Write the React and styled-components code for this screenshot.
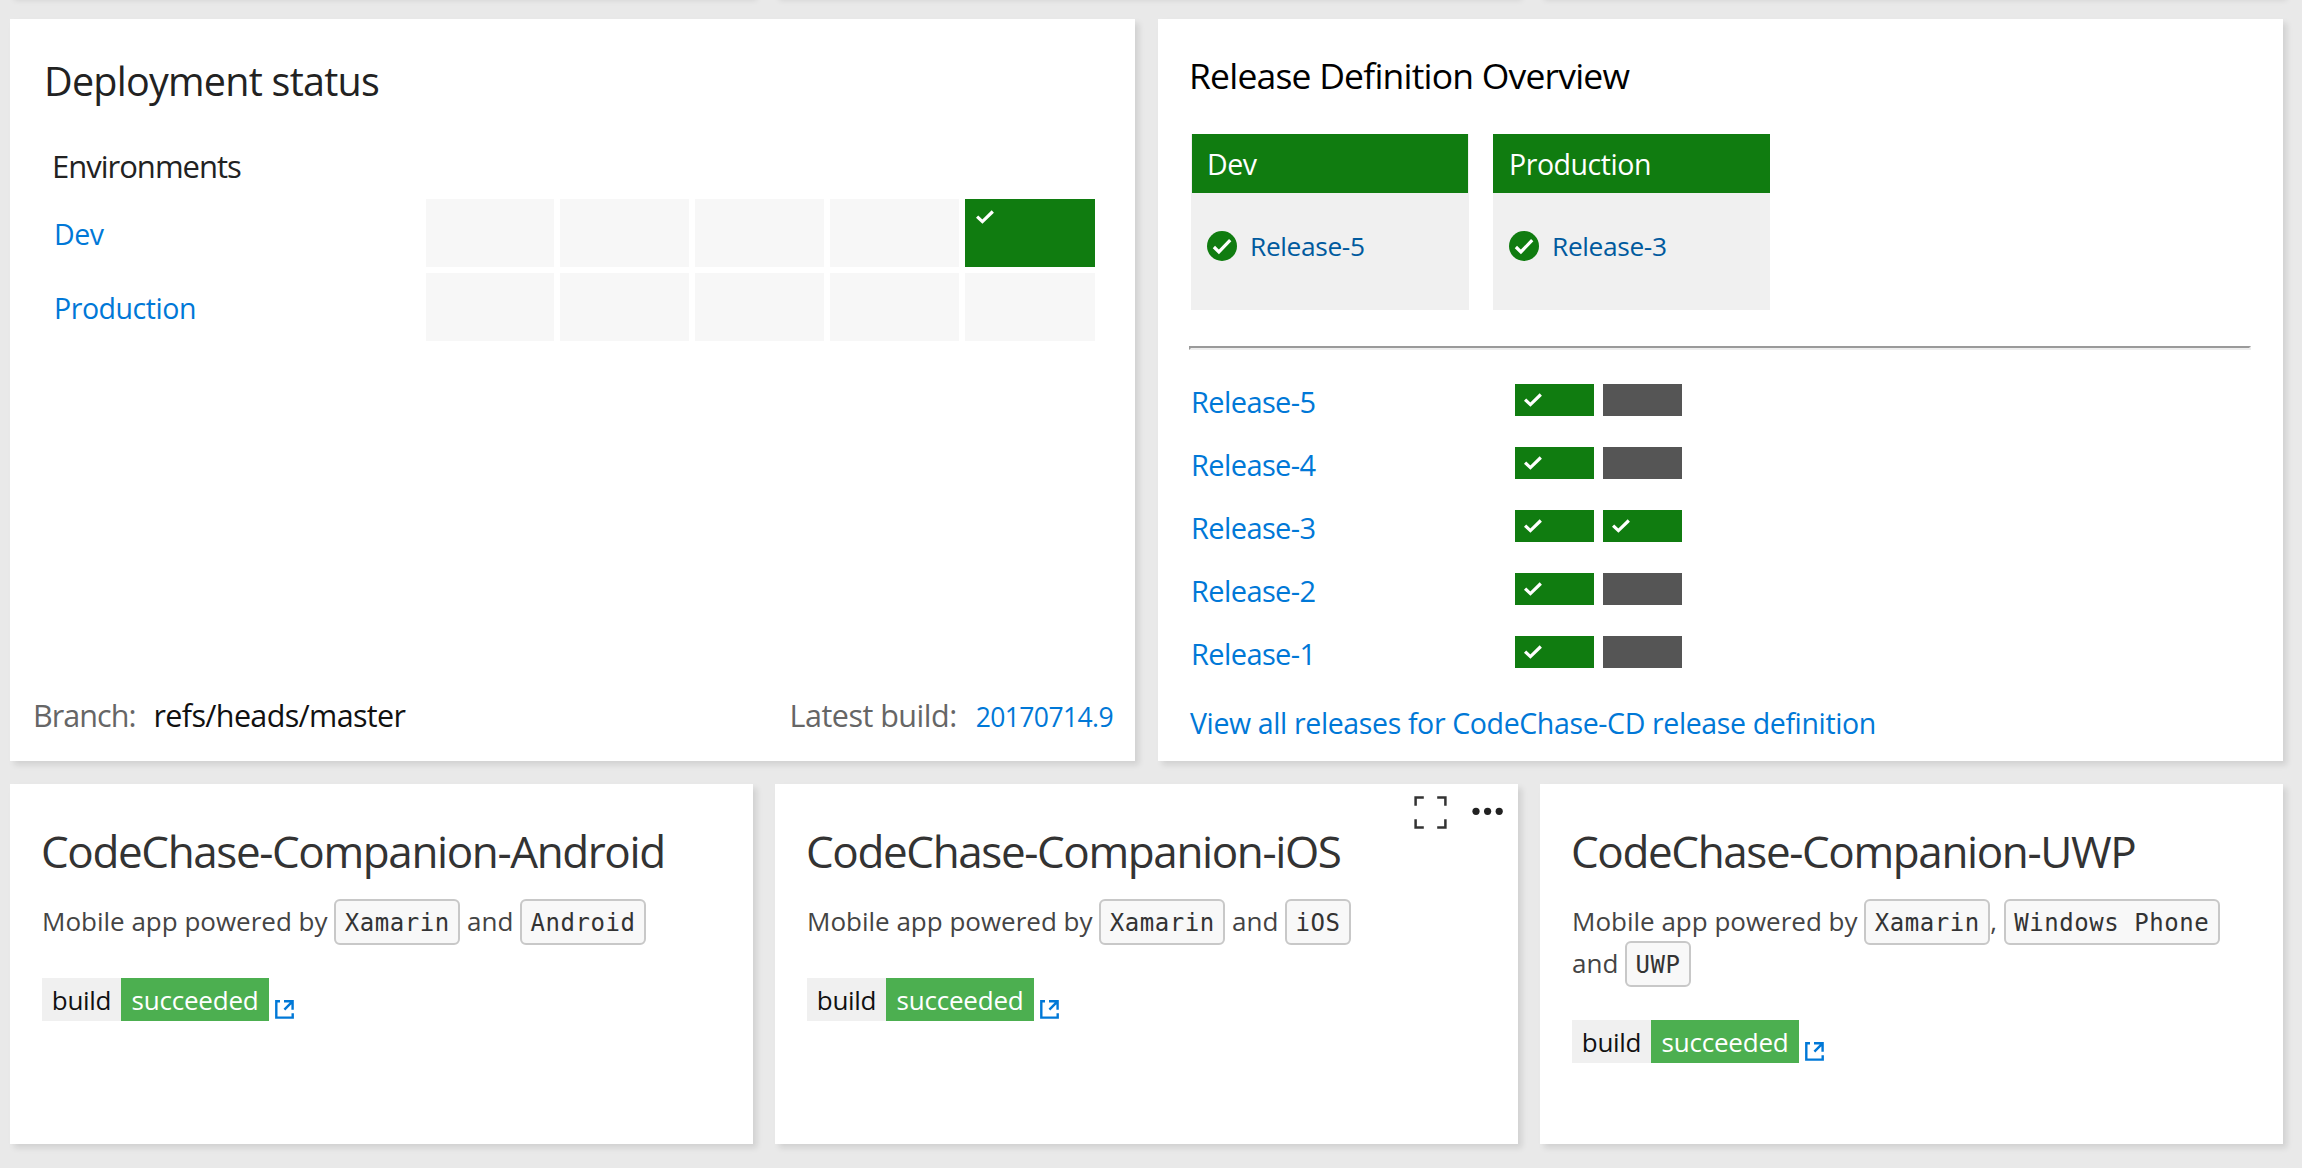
import React from "react";
import styled, { createGlobalStyle } from "styled-components";

const GlobalStyle = createGlobalStyle`
  *, *::before, *::after { box-sizing: border-box; }
  body {
    margin: 0;
    background: #e9e9e9;
    color: #222;
    font-family: "Open Sans", "Noto Sans", sans-serif;
  }
`;

const Dashboard = styled.main`
  display: flex;
  flex-direction: column;
  gap: 23px;
  width: 2302px;
  height: 1168px;
  padding-left: 10px;
  overflow: hidden;
`;

const WideRow = styled.div`
  display: grid;
  grid-template-columns: 1125px 1125px;
  column-gap: 23px;
`;

const TileRow = styled.div`
  display: grid;
  grid-template-columns: repeat(3, 743px);
  column-gap: 22px;
`;

const ScrolledRow = styled(TileRow)`
  flex: none;
  height: 60px;
  margin-top: -64px;
`;

const Card = styled.section`
  position: relative;
  display: flex;
  flex-direction: column;
  background: #fff;
  box-shadow: 4px 4px 6px rgba(0, 0, 0, 0.1);
`;

const DeploymentCard = styled(Card)`
  height: 742px;
  padding: 35px 22px 23px 0;
`;

const DeploymentTitle = styled.h2`
  margin: 0 0 0 34px;
  font-size: 39.5px;
  font-weight: 400;
  line-height: 54px;
  letter-spacing: -0.75px;
`;

const SectionLabel = styled.h3`
  margin: 37px 0 12px 42px;
  font-size: 31px;
  font-weight: 400;
  line-height: 42px;
  letter-spacing: -1px;
`;

const EnvironmentTable = styled.div`
  display: flex;
  flex-direction: column;
  gap: 6px;
  padding-left: 44px;
`;

const EnvironmentRow = styled.div`
  display: grid;
  grid-template-columns: 366px 128px 129px 129px 129px 130px;
  grid-template-rows: 68px;
  column-gap: 6px;
`;

const Link = styled.a`
  color: #0078d7;
  text-decoration: none;
  white-space: nowrap;
`;

const EnvironmentLink = styled(Link)`
  padding-top: 3px;
  font-size: 28.5px;
  line-height: 65px;
  letter-spacing: -0.45px;
`;

const Cell = styled.div`
  padding: 11px;
  line-height: 0;
  background: ${(p) => (p.$passed ? "#107c10" : "#f7f7f7")};
`;

const DeploymentFooter = styled.footer`
  display: flex;
  align-items: baseline;
  justify-content: space-between;
  margin-top: auto;
  padding-left: 23px;
  line-height: 42px;
`;

const Field = styled.div`
  display: flex;
  align-items: baseline;
  gap: ${(p) => p.$gap}px;
`;

const FieldName = styled.span`
  color: #666;
  font-size: 30.5px;
  letter-spacing: ${(p) => p.$tracking}px;
`;

const BranchName = styled.span`
  color: #111;
  font-size: 30.5px;
  letter-spacing: -0.65px;
`;

const BuildLink = styled(Link)`
  font-size: 26.5px;
  letter-spacing: -0.6px;
`;

const ReleaseCard = styled(Card)`
  height: 742px;
  padding: 32px 32px 0 31px;
`;

const ReleaseTitle = styled.h2`
  margin: 0;
  color: #000;
  font-size: 35.5px;
  font-weight: 400;
  line-height: 48px;
  letter-spacing: -0.8px;
`;

const StageList = styled.div`
  display: flex;
  gap: 24px;
  margin: 35px 0 36px 2px;
`;

const Stage = styled.article`
  width: ${(p) => p.$width}px;
  height: 176px;
  background: #f0f0f0;
`;

const StageHeader = styled.header`
  height: 59px;
  margin: 0 ${(p) => p.$inset}px;
  padding: 1px 0 0 ${(p) => 16 - p.$inset}px;
  background: #107c10;
  color: #fff;
  font-size: 28.5px;
  line-height: 59px;
  letter-spacing: -0.45px;
`;

const StageBody = styled.div`
  display: flex;
  align-items: center;
  gap: 13px;
  height: 38px;
  margin-top: 34px;
  padding-left: 16px;
`;

const StageLink = styled(Link)`
  color: #005a9e;
  font-size: 26.3px;
  letter-spacing: -0.35px;
`;

const Divider = styled.hr`
  width: 1062px;
  height: 4px;
  margin: 0 0 34px;
  border: 2px solid;
  border-color: #9a9a9a #eee #eee #9a9a9a;
`;

const ReleaseList = styled.div`
  display: flex;
  flex-direction: column;
  gap: 31px;
  padding-left: 2px;
`;

const ReleaseRow = styled.div`
  display: grid;
  grid-template-columns: 315px 79px 79px;
  grid-template-rows: 32px;
  column-gap: 9px;
`;

const ReleaseLink = styled(Link)`
  padding-top: 4px;
  font-size: 29px;
  line-height: 28px;
  letter-spacing: -0.6px;
`;

const Chip = styled.div`
  padding: 9px;
  line-height: 0;
  background: ${(p) => (p.$passed ? "#107c10" : "#555")};
`;

const AllReleasesLink = styled(Link)`
  margin: 35px 0 0 1px;
  font-size: 28.5px;
  line-height: 40px;
  letter-spacing: -0.37px;
`;

const AppCard = styled(Card)`
  height: 360px;
  padding: 37px 32px 0;
`;

const AppTitle = styled.h2`
  margin: 0 0 19px -1px;
  color: #333;
  font-size: 44px;
  font-weight: 400;
  line-height: 60px;
  letter-spacing: -1.38px;
  white-space: nowrap;
`;

const Description = styled.p`
  margin: 0 0 36px;
  color: #444;
  font-size: 26px;
  line-height: 42px;
`;

const Tag = styled.code`
  padding: 8px 8.5px 6px;
  border: 2px solid #c8c8c8;
  border-radius: 6px;
  background: #f8f8f8;
  color: #333;
  font-family: "DejaVu Sans Mono", monospace;
  font-size: 24px;
  line-height: 1;
  letter-spacing: 0.55px;
  white-space: nowrap;
`;

const BadgeLine = styled.div`
  display: flex;
  align-items: flex-end;
  gap: 6px;
  font-size: 26px;
  line-height: 44px;
`;

const Badge = styled.div`
  display: grid;
  grid-template-columns: 79px 148px;
  grid-template-rows: 43px;
  text-align: center;
`;

const BadgeLabel = styled.span`
  background: #f0f0f0;
  color: #111;
  letter-spacing: -0.3px;
`;

const BadgeStatus = styled.span`
  background: #4caf50;
  color: #fff;
  letter-spacing: -0.2px;
`;

const ExternalIcon = styled.svg`
  margin-bottom: 2px;
`;

const CardTools = styled.div`
  position: absolute;
  top: 12px;
  right: 15px;
  display: flex;
  align-items: flex-start;
  gap: 25px;
`;

function Check() {
  return (
    <svg width="19" height="14" viewBox="0 0 19 14" fill="none">
      <path d="M1.1 6.6 6.4 11.6 16.8 1.5" stroke="#fff" strokeWidth="3.2" />
    </svg>
  );
}

function PassedIcon() {
  return (
    <svg width="30" height="30" viewBox="0 0 30 30" fill="none">
      <circle cx="15" cy="15" r="15" fill="#107c10" />
      <path d="M6.9 16 11.9 20.9 23.2 9.2" stroke="#fff" strokeWidth="3.2" />
    </svg>
  );
}

function External() {
  return (
    <ExternalIcon width="19" height="19" viewBox="0 0 19 19" fill="none" stroke="#0078d7" strokeWidth="2.4">
      <path d="M5 1.3H1.3V17.6H17.7V13.2" />
      <path d="M9 1.3H17.6V9.8M17.3 1.6 9.4 9.6" />
    </ExternalIcon>
  );
}

function Tools() {
  return (
    <CardTools>
      <svg width="33" height="33" viewBox="0 0 33 33" fill="none" stroke="#333" strokeWidth="2.5">
        <path d="M1.6 9.8V1.6H9.8M23.2 1.6H31.4V9.8M31.4 23.2V31.4H23.2M9.8 31.4H1.6V23.2" />
      </svg>
      <svg width="31" height="33" viewBox="0 0 31 33" fill="#222">
        <circle cx="4" cy="15.3" r="3.6" />
        <circle cx="15.6" cy="15.3" r="3.6" />
        <circle cx="27.2" cy="15.3" r="3.6" />
      </svg>
    </CardTools>
  );
}

const environments = [
  { name: "Dev", runs: [false, false, false, false, true] },
  { name: "Production", runs: [false, false, false, false, false] },
];

const stages = [
  { name: "Dev", release: "Release-5", width: 278, inset: 1 },
  { name: "Production", release: "Release-3", width: 277, inset: 0 },
];

const releases = [
  { name: "Release-5", stages: [true, false] },
  { name: "Release-4", stages: [true, false] },
  { name: "Release-3", stages: [true, true] },
  { name: "Release-2", stages: [true, false] },
  { name: "Release-1", stages: [true, false] },
];

function AppTile({ name, tools, children }) {
  return (
    <AppCard>
      <AppTitle>{name}</AppTitle>
      <Description>{children}</Description>
      <BadgeLine>
        <Badge>
          <BadgeLabel>build</BadgeLabel>
          <BadgeStatus>succeeded</BadgeStatus>
        </Badge>
        <External />
      </BadgeLine>
      {tools && <Tools />}
    </AppCard>
  );
}

export default function App() {
  return (
    <>
      <GlobalStyle />
      <Dashboard>
        <ScrolledRow>
          <Card />
          <Card />
          <Card />
        </ScrolledRow>

        <WideRow>
          <DeploymentCard>
            <DeploymentTitle>Deployment status</DeploymentTitle>
            <SectionLabel>Environments</SectionLabel>
            <EnvironmentTable>
              {environments.map((env) => (
                <EnvironmentRow key={env.name}>
                  <EnvironmentLink>{env.name}</EnvironmentLink>
                  {env.runs.map((passed, i) => (
                    <Cell key={i} $passed={passed}>{passed && <Check />}</Cell>
                  ))}
                </EnvironmentRow>
              ))}
            </EnvironmentTable>
            <DeploymentFooter>
              <Field $gap={18}>
                <FieldName $tracking={-0.95}>Branch:</FieldName>
                <BranchName>refs/heads/master</BranchName>
              </Field>
              <Field $gap={19}>
                <FieldName $tracking={-0.5}>Latest build:</FieldName>
                <BuildLink>20170714.9</BuildLink>
              </Field>
            </DeploymentFooter>
          </DeploymentCard>

          <ReleaseCard>
            <ReleaseTitle>Release Definition Overview</ReleaseTitle>
            <StageList>
              {stages.map((stage) => (
                <Stage key={stage.name} $width={stage.width}>
                  <StageHeader $inset={stage.inset}>{stage.name}</StageHeader>
                  <StageBody>
                    <PassedIcon />
                    <StageLink>{stage.release}</StageLink>
                  </StageBody>
                </Stage>
              ))}
            </StageList>
            <Divider />
            <ReleaseList>
              {releases.map((release) => (
                <ReleaseRow key={release.name}>
                  <ReleaseLink>{release.name}</ReleaseLink>
                  {release.stages.map((passed, i) => (
                    <Chip key={i} $passed={passed}>{passed && <Check />}</Chip>
                  ))}
                </ReleaseRow>
              ))}
            </ReleaseList>
            <AllReleasesLink>View all releases for CodeChase-CD release definition</AllReleasesLink>
          </ReleaseCard>
        </WideRow>

        <TileRow>
          <AppTile name="CodeChase-Companion-Android">
            Mobile app powered by <Tag>Xamarin</Tag> and <Tag>Android</Tag>
          </AppTile>
          <AppTile name="CodeChase-Companion-iOS" tools>
            Mobile app powered by <Tag>Xamarin</Tag> and <Tag>iOS</Tag>
          </AppTile>
          <AppTile name="CodeChase-Companion-UWP">
            Mobile app powered by <Tag>Xamarin</Tag>, <Tag>Windows Phone</Tag> and <Tag>UWP</Tag>
          </AppTile>
        </TileRow>
      </Dashboard>
    </>
  );
}
